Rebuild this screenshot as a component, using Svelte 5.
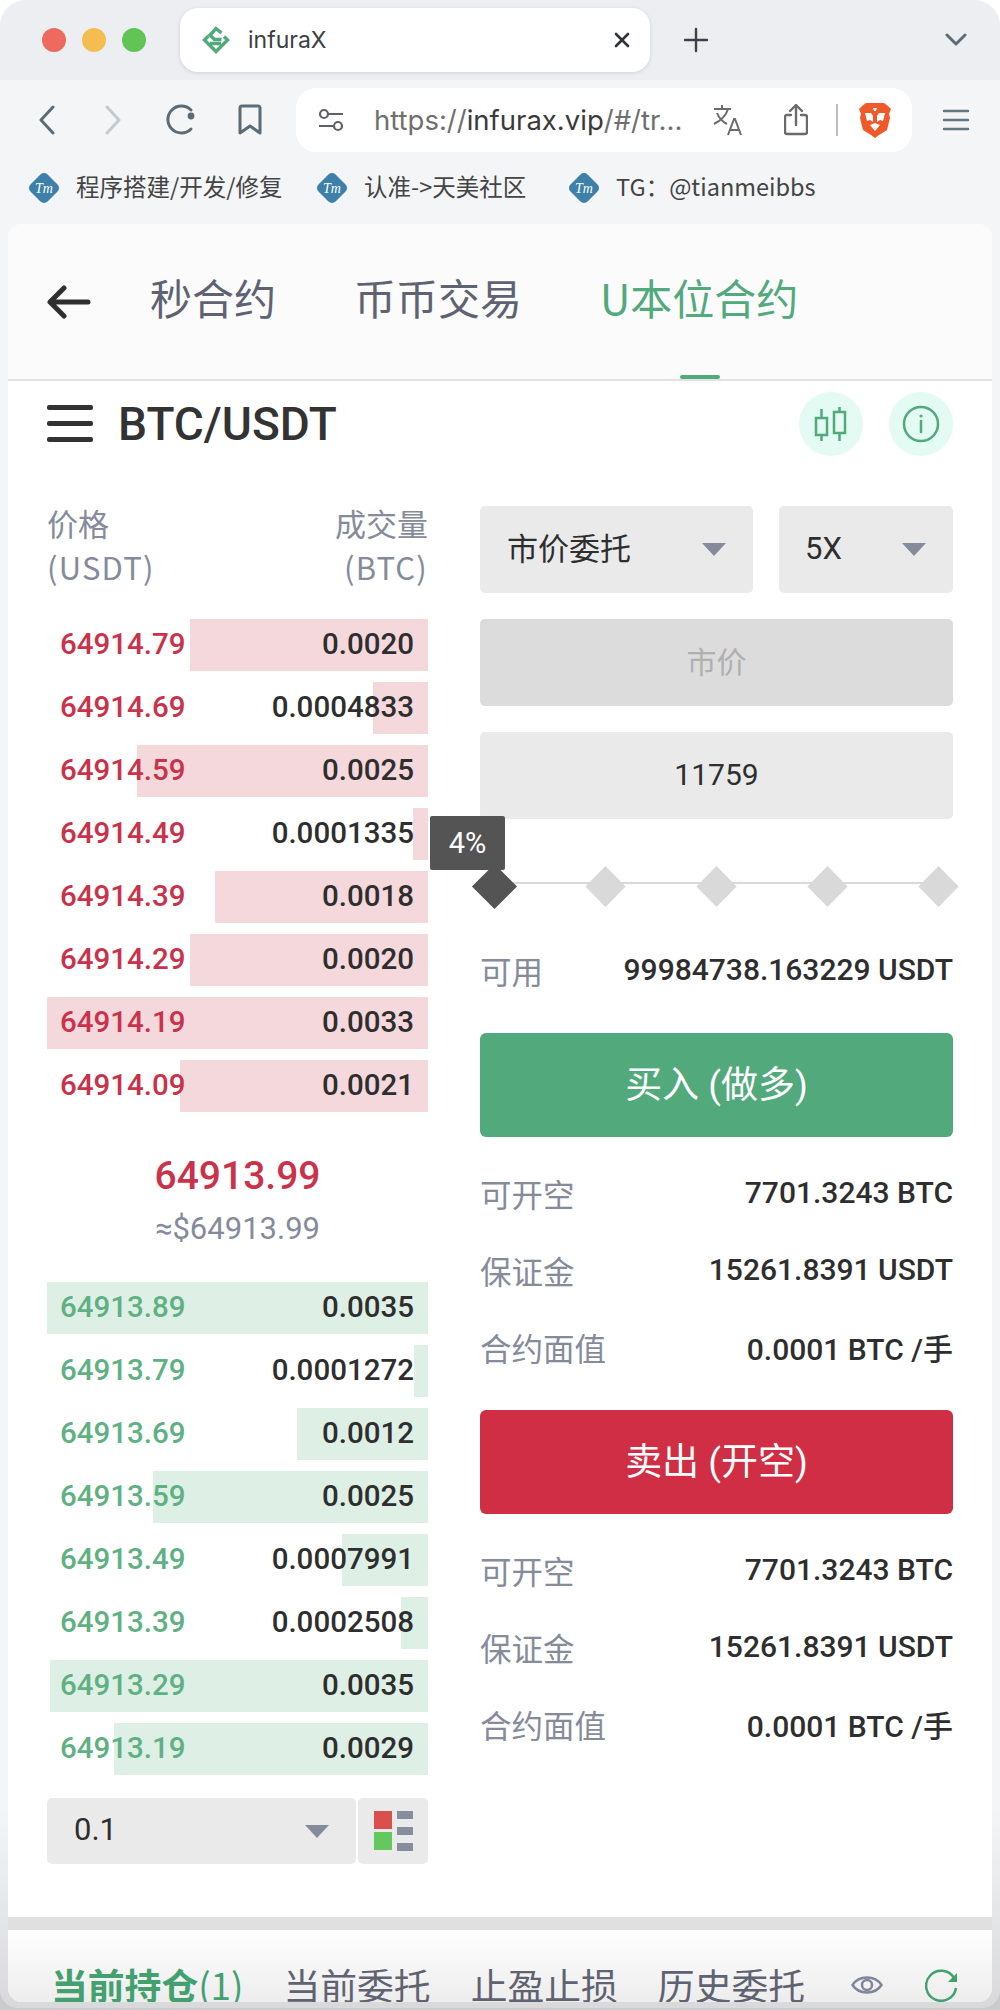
<script>
    const asks = [
        { price: "64914.79", size: "0.0020", left: 143 },
        { price: "64914.69", size: "0.0004833", left: 326 },
        { price: "64914.59", size: "0.0025", left: 90 },
        { price: "64914.49", size: "0.0001335", left: 366 },
        { price: "64914.39", size: "0.0018", left: 168 },
        { price: "64914.29", size: "0.0020", left: 143 },
        { price: "64914.19", size: "0.0033", left: 0 },
        { price: "64914.09", size: "0.0021", left: 133 },
    ];
    const bids = [
        { price: "64913.89", size: "0.0035", left: 0 },
        { price: "64913.79", size: "0.0001272", left: 367 },
        { price: "64913.69", size: "0.0012", left: 250 },
        { price: "64913.59", size: "0.0025", left: 106 },
        { price: "64913.49", size: "0.0007991", left: 295 },
        { price: "64913.39", size: "0.0002508", left: 354 },
        { price: "64913.29", size: "0.0035", left: 3 },
        { price: "64913.19", size: "0.0029", left: 67 },
    ];
    const shortInfo = [
        { label: "可开空", value: "7701.3243 BTC" },
        { label: "保证金", value: "15261.8391 USDT" },
        { label: "合约面值", value: "0.0001 BTC /手" },
    ];
    const bookmarks = ["程序搭建/开发/修复", "认准->天美社区", "TG：@tianmeibbs"];
</script>

<div class="screen">
<div class="window">
    <div class="tabstrip">
        <div class="lights">
            <i class="red"></i><i class="yellow"></i><i class="green"></i>
        </div>
        <div class="tab">
            <svg width="28" height="28" viewBox="0 0 28 28" fill="none" stroke="#52a97b" stroke-width="3.400">
                <path d="M19.500 7L14 2.500 8 9l4.500 4.500h7" />
                <path d="M6.500 10L2.500 14 14 25.500 25.500 14l-3.500-3.500" />
                <path d="M8 17.500h11" />
            </svg>
            <span>infuraX</span>
            <svg class="close" width="16" height="16" viewBox="0 0 16 16" stroke="#2f3338" stroke-width="2.600" stroke-linecap="round"><path d="M2 2l12 12M14 2L2 14" /></svg>
        </div>
        <svg class="plus" width="26" height="26" viewBox="0 0 26 26" stroke="#3d4248" stroke-width="2.400" stroke-linecap="round"><path d="M13 2v22M2 13h22" /></svg>
        <svg class="chev" width="22" height="14" viewBox="0 0 22 14" fill="none" stroke="#5c6b76" stroke-width="3" stroke-linecap="round" stroke-linejoin="round"><path d="M2 2l9 9 9-9" /></svg>
    </div>

    <div class="toolbar">
        <div class="nav">
            <svg width="18" height="30" viewBox="0 0 18 30" fill="none" stroke="#5c6b76" stroke-width="3" stroke-linecap="round" stroke-linejoin="round"><path d="M15 2L3 15l12 13" /></svg>
            <svg width="18" height="30" viewBox="0 0 18 30" fill="none" stroke="#c3c9cd" stroke-width="3" stroke-linecap="round" stroke-linejoin="round"><path d="M3 2l12 13L3 28" /></svg>
            <svg width="32" height="32" viewBox="0 0 32 32" fill="none" stroke="#5c6b76" stroke-width="3" stroke-linecap="round"><path d="M26 6A13.500 13.500 0 1 0 26 25" /><circle cx="26" cy="12" r="3.400" fill="#5c6b76" stroke="none" /></svg>
            <svg width="24" height="32" viewBox="0 0 24 32" fill="none" stroke="#5c6b76" stroke-width="3" stroke-linejoin="round"><path d="M2 4q0-2 2-2h16q2 0 2 2v25l-10-7-10 7z" /></svg>
        </div>
        <div class="urlbar">
            <svg class="sliders" width="26" height="24" viewBox="0 0 26 24" fill="none" stroke="#5f6265" stroke-width="2.200"><circle cx="6" cy="6" r="4" /><path d="M10 6h15M1 18h15" /><circle cx="20" cy="18" r="4" /></svg>
            <span class="url"><span class="faded">https://</span>infurax.vip<span class="faded">/#/tr...</span></span>
            <svg class="translate" width="32" height="32" viewBox="0 0 32 32" fill="none" stroke="#6b6b6b" stroke-width="2"><path d="M1 5h17M9 1v4M15 5C13 12 7 17 1 20M4 9c2 5 6 9 10 11M15 31l6-16h1l6 16M17 26h9" /></svg>
            <svg class="share" width="24" height="32" viewBox="0 0 24 32" fill="none" stroke="#6b6b6b" stroke-width="2.400" stroke-linejoin="round" stroke-linecap="round"><path d="M7 11H3q-2 0-2 2v15q0 2 2 2h18q2 0 2-2V13q0-2-2-2h-4M12 21V2M6 7l6-6 6 6" /></svg>
            <i class="sep"></i>
            <svg class="brave" width="32" height="36" viewBox="0 0 32 36">
                <path d="M7 1h18l4 3 3 3-2 5 1 4-3 12-8 5-4 3-4-3-8-5L1 16l1-4-2-5 3-3z" fill="#f0592a" />
                <path d="M6 11h6l2 3v6l-3-2-3 1zM26 11h-6l-2 3v6l3-2 3 1zM14 6h4l-1 3h-2z" fill="#fff" />
                <path d="M11 23l5-2 5 2-5 6z" fill="#fff" />
            </svg>
        </div>
        <svg class="burger" width="28" height="22" viewBox="0 0 28 22" stroke="#667680" stroke-width="2.400" stroke-linecap="round"><path d="M2 2h24M2 11h24M2 20h24" /></svg>
    </div>

    <div class="bookmarks">
        {#each bookmarks as mark}
            <div class="mark">
                <svg width="30" height="30" viewBox="0 0 30 30">
                    <path d="M15 5l10 10-10 10L5 15z" fill="#3d80a9" stroke="#3d80a9" stroke-width="10" stroke-linejoin="round" />
                    <text x="15" y="20" text-anchor="middle" class="tm">Tm</text>
                </svg>
                <span class="mark-text">{mark}</span>
            </div>
        {/each}
    </div>

    <div class="card">
        <header class="top">
            <svg width="44" height="34" viewBox="0 0 44 34" fill="none" stroke="#2f2f2f" stroke-width="5" stroke-linecap="round" stroke-linejoin="round"><path d="M41 17H4M17 3L3 17l14 14" /></svg>
            <span class="toptab one">秒合约</span>
            <span class="toptab two">币币交易</span>
            <span class="toptab active">U本位合约</span>
        </header>

        <div class="pair">
            <div class="burger-dark"><i></i><i></i><i></i></div>
            <span class="pair-name">BTC/USDT</span>
            <div class="pair-icons">
                <span class="round">
                    <svg width="34" height="36" viewBox="0 0 34 36" fill="none" stroke="#52a97b" stroke-width="2.500"><rect x="2" y="12" width="11" height="17" /><rect x="20" y="6" width="11" height="21" /><path d="M7.500 3v9M7.500 29v6M25.500 1v5M25.500 27v8" /></svg>
                </span>
                <span class="round">
                    <svg width="38" height="38" viewBox="0 0 38 38" fill="none" stroke="#52a97b" stroke-width="2.500"><circle cx="19" cy="19" r="17" /><path d="M19 16v11" stroke-linecap="round" /><circle cx="19" cy="11" r="1.600" fill="#52a97b" stroke="none" /></svg>
                </span>
            </div>
        </div>

        <div class="trade">
            <div class="book">
                <div class="book-head">
                    <span>价格<br /><span class="unit">(USDT)</span></span>
                    <span class="right">成交量<br /><span class="unit">(BTC)</span></span>
                </div>
                <div class="rows">
                    {#each asks as row}
                        <div class="row">
                            <i class="depth ask" style="left: {row.left}px"></i>
                            <span class="price ask-text">{row.price}</span>
                            <span class="size">{row.size}</span>
                        </div>
                    {/each}
                </div>
                <div class="mid">
                    <div class="mid-price">64913.99</div>
                    <div class="mid-usd">≈$64913.99</div>
                </div>
                <div class="rows">
                    {#each bids as row}
                        <div class="row">
                            <i class="depth bid" style="left: {row.left}px"></i>
                            <span class="price bid-text">{row.price}</span>
                            <span class="size">{row.size}</span>
                        </div>
                    {/each}
                </div>
                <div class="book-foot">
                    <div class="select step"><span class="num">0.1</span><i class="caret"></i></div>
                    <div class="layout-btn">
                        <div class="blocks"><i class="r"></i><i class="g"></i></div>
                        <div class="dots"><i></i><i></i><i></i></div>
                    </div>
                </div>
            </div>

            <div class="form">
                <div class="selects">
                    <div class="select kind"><span>市价委托</span><i class="caret"></i></div>
                    <div class="select lever"><span class="num">5X</span><i class="caret"></i></div>
                </div>
                <div class="field disabled"><span>市价</span></div>
                <div class="field"><span class="num">11759</span></div>

                <div class="slider">
                    <i class="track"></i>
                    <i class="node on"></i><i class="node"></i><i class="node"></i><i class="node"></i><i class="node"></i>
                    <span class="tip">4%</span>
                </div>

                <div class="info"><span>可用</span><b>99984738.163229 USDT</b></div>

                <div class="action buy"><span>买入 (做多)</span></div>
                <div class="infos">
                    {#each shortInfo as item}
                        <div class="info"><span>{item.label}</span><b>{item.value}</b></div>
                    {/each}
                </div>
                <div class="action sell"><span>卖出 (开空)</span></div>
                <div class="infos">
                    {#each shortInfo as item}
                        <div class="info"><span>{item.label}</span><b>{item.value}</b></div>
                    {/each}
                </div>
            </div>
        </div>

        <div class="band"></div>

        <div class="orders">
            <span class="order active">当前持仓<span class="count">(1)</span></span>
            <span class="order">当前委托</span>
            <span class="order">止盈止损</span>
            <span class="order">历史委托</span>
            <svg class="eye" width="32" height="22" viewBox="0 0 32 22" fill="none" stroke="#80869a" stroke-width="2.500"><path d="M1.500 11C8 1 24 1 30.500 11 24 21 8 21 1.500 11z" /><circle cx="16" cy="11" r="5" /></svg>
            <svg class="reload" width="34" height="34" viewBox="0 0 34 34" fill="none" stroke="#43a06f" stroke-width="2.500"><path d="M29 10A15 15 0 1 0 31 20" /><path d="M32 5v9h-9z" fill="#43a06f" stroke="none" /></svg>
        </div>
    </div>
</div>
</div>

<style>
    :global(body) {
        margin: 0;
    }
    .screen {
        width: 1000px;
        height: 2010px;
        background: linear-gradient(#fff 50%, #cbcbcd 50%);
    }
    .window {
        width: 1000px;
        height: 2008px;
        overflow: hidden;
        background: linear-gradient(#f3f5f7 90%, #d9d9db);
        border-radius: 26px 26px 18px 18px;
        font-family: "Noto Sans CJK SC", "Noto Sans", sans-serif;
    }
    i {
        display: block;
    }

    .tabstrip {
        height: 80px;
        box-sizing: border-box;
        background: #eceef2;
        display: flex;
        align-items: center;
        padding-left: 42px;
    }
    .lights {
        display: flex;
        gap: 16px;
        width: 138px;
    }
    .lights i {
        width: 24px;
        height: 24px;
        border-radius: 50%;
    }
    .red {
        background: #ee6a5f;
    }
    .yellow {
        background: #f5bd4f;
    }
    .green {
        background: #61c454;
    }
    .tab {
        width: 470px;
        height: 64px;
        box-sizing: border-box;
        background: #fff;
        border-radius: 18px;
        box-shadow: 0 1px 4px rgba(0, 0, 0, 0.12);
        display: flex;
        align-items: center;
        padding: 0 20px 0 22px;
        font-family: "Inter", sans-serif;
        font-size: 23px;
        color: #3c4043;
    }
    .tab span {
        margin-left: 18px;
    }
    .close {
        margin-left: auto;
    }
    .plus {
        margin-left: 33px;
    }
    .chev {
        margin-left: auto;
        margin-right: 33px;
    }

    .toolbar {
        height: 80px;
        display: flex;
        align-items: center;
        padding-left: 14px;
    }
    .nav {
        width: 282px;
        display: grid;
        grid-template-columns: 66px 66px 70px 68px;
        justify-items: center;
        align-items: center;
    }
    .urlbar {
        width: 616px;
        height: 64px;
        background: #fff;
        border-radius: 20px;
        display: flex;
        align-items: center;
        padding-left: 22px;
        box-sizing: border-box;
    }
    .url {
        width: 310px;
        margin-left: 30px;
        font-family: "Inter", sans-serif;
        font-size: 27.500px;
        color: #3a3a3a;
        white-space: nowrap;
    }
    .faded {
        color: #6f6f6f;
    }
    .translate {
        margin-left: 29px;
    }
    .share {
        margin-left: 39px;
    }
    .sep {
        width: 2px;
        height: 32px;
        background: #bdbdbd;
        margin-left: 28px;
    }
    .brave {
        margin-left: 21px;
    }
    .burger {
        margin-left: 30px;
    }

    .bookmarks {
        height: 64px;
        box-sizing: border-box;
        padding: 0 0 8px 29px;
        display: flex;
        align-items: center;
        font-size: 23.500px;
        color: #444;
    }
    .mark {
        display: flex;
        align-items: center;
        gap: 17px;
    }
    .mark:nth-child(1) {
        width: 288px;
    }
    .mark:nth-child(2) {
        width: 252px;
    }
    .mark-text {
        padding-bottom: 4px;
    }
    .tm {
        fill: #fff;
        font: italic 14px "Liberation Serif", serif;
    }

    .card {
        margin: 0 8px;
        height: 1778px;
        background: #fff;
        border-radius: 14px;
        overflow: hidden;
        position: relative;
    }
    .top {
        height: 157px;
        box-sizing: border-box;
        background: #fbfbfc;
        border-bottom: 2px solid #e2e2e2;
        display: flex;
        align-items: center;
        padding-left: 39px;
        font-size: 42px;
        color: #5f6270;
        position: relative;
    }
    .toptab {
        padding-bottom: 10px;
    }
    .toptab.one {
        margin-left: 59px;
    }
    .toptab.two {
        margin-left: 78px;
    }
    .toptab.active {
        margin-left: 78px;
        color: #52a97b;
    }
    .toptab.active::after {
        content: "";
        position: absolute;
        left: 672px;
        bottom: 0;
        width: 40px;
        height: 4px;
        border-radius: 2px;
        background: #52a97b;
    }

    .pair {
        height: 125px;
        box-sizing: border-box;
        display: flex;
        align-items: flex-start;
        padding: 11px 0 0 39px;
    }
    .burger-dark {
        width: 46px;
        margin-top: 13px;
        display: flex;
        flex-direction: column;
        gap: 11px;
    }
    .burger-dark i {
        height: 5px;
        border-radius: 2px;
        background: #333;
    }
    .pair-name {
        margin-left: 25px;
        font: 500 46px/64px "Roboto", sans-serif;
        color: #333;
    }
    .pair-icons {
        margin-left: auto;
        margin-right: 39px;
        display: flex;
        gap: 26px;
    }
    .round {
        width: 64px;
        height: 64px;
        border-radius: 50%;
        background: #e3fbf2;
        display: flex;
        align-items: center;
        justify-content: center;
    }

    .trade {
        display: flex;
        padding: 0 39px;
        gap: 52px;
        align-items: flex-start;
    }
    .book {
        width: 381px;
        flex-shrink: 0;
    }
    .book-head {
        display: flex;
        justify-content: space-between;
        font-size: 31px;
        line-height: 44px;
        color: #858b9b;
        height: 118px;
        margin-top: -5px;
    }
    .book-head .right {
        text-align: right;
    }
    .unit {
        letter-spacing: 1.200px;
    }
    .rows {
        display: flex;
        flex-direction: column;
        gap: 11px;
    }
    .row {
        height: 52px;
        position: relative;
        display: flex;
        align-items: center;
        justify-content: space-between;
        padding: 0 14px 2px 13px;
        box-sizing: border-box;
        font-family: "Roboto", sans-serif;
        font-weight: 500;
        font-size: 29.500px;
    }
    .depth {
        position: absolute;
        top: 0;
        bottom: 0;
        right: 0;
    }
    .depth.ask {
        background: #f5d8dc;
    }
    .depth.bid {
        background: #deefe6;
    }
    .price,
    .size {
        position: relative;
    }
    .ask-text {
        color: #c9324a;
    }
    .bid-text {
        color: #5fb183;
    }
    .size {
        color: #2e2e2e;
    }
    .mid {
        height: 170px;
        box-sizing: border-box;
        padding-top: 36px;
        text-align: center;
        font-family: "Roboto", sans-serif;
    }
    .mid-price {
        font-size: 39px;
        font-weight: 500;
        line-height: 56px;
        color: #c9324a;
    }
    .mid-usd {
        font-size: 31px;
        line-height: 50px;
        color: #858b9b;
    }
    .book-foot {
        display: flex;
        gap: 2px;
        margin-top: 23px;
    }

    .select {
        height: 87px;
        background: #eaeaea;
        border-radius: 5px;
        display: flex;
        align-items: center;
        padding: 0 27px;
        box-sizing: border-box;
        font-size: 31px;
        color: #2e2e2e;
        font-family: "Roboto", "Noto Sans CJK SC", sans-serif;
    }
    .select span,
    .field span,
    .action span {
        padding-bottom: 6px;
    }
    .select .num,
    .field .num {
        padding-bottom: 3px;
    }
    .caret {
        margin-left: auto;
        width: 0;
        height: 0;
        border-left: 12px solid transparent;
        border-right: 12px solid transparent;
        border-top: 13px solid #858b9b;
    }
    .select.step {
        flex: 1;
        height: 66px;
    }
    .layout-btn {
        width: 70px;
        height: 66px;
        background: #eaeaea;
        border-radius: 5px;
        display: flex;
        gap: 5px;
        padding: 13px 16px;
        box-sizing: border-box;
    }
    .blocks {
        display: flex;
        flex-direction: column;
        gap: 3px;
    }
    .blocks i {
        width: 18px;
        height: 18px;
    }
    .blocks .r {
        background: #d9504d;
    }
    .blocks .g {
        background: #63c95c;
    }
    .dots {
        display: flex;
        flex-direction: column;
        justify-content: space-between;
    }
    .dots i {
        width: 16px;
        height: 8px;
        background: #878d9c;
    }

    .form {
        flex: 1;
    }
    .selects {
        display: flex;
        gap: 26px;
    }
    .kind {
        flex: 1;
    }
    .lever {
        width: 174px;
        padding-left: 26px;
    }
    .field {
        height: 87px;
        margin-top: 26px;
        background: #eaeaea;
        border-radius: 5px;
        display: flex;
        align-items: center;
        justify-content: center;
        font: 30px "Roboto", "Noto Sans CJK SC", sans-serif;
        color: #2e2e2e;
    }
    .field.disabled {
        background: #dcdcdc;
        color: #b0b0b0;
    }

    .slider {
        height: 90px;
        margin-top: 22px;
        position: relative;
        display: flex;
        justify-content: space-between;
        align-items: center;
    }
    .track {
        position: absolute;
        left: 10px;
        right: 10px;
        top: 41px;
        height: 2px;
        background: #d9d9d9;
    }
    .node {
        width: 29px;
        height: 29px;
        background: #d9d9d9;
        transform: scale(0.98, 1) rotate(45deg);
        position: relative;
    }
    .node.on {
        background: #545454;
        transform: scale(1.1) rotate(45deg);
    }
    .tip {
        position: absolute;
        left: -50px;
        top: -25px;
        width: 75px;
        height: 54px;
        background: #545454;
        border-radius: 2px;
        color: #fff;
        display: flex;
        align-items: center;
        justify-content: center;
        font: 29px "Roboto", sans-serif;
    }

    .info {
        height: 77px;
        display: flex;
        justify-content: space-between;
        align-items: center;
        font-size: 31.500px;
        color: #858b9b;
    }
    .info b {
        font-family: "Roboto", "Noto Sans CJK SC", sans-serif;
        font-weight: 500;
        font-size: 30px;
        color: #2e2e2e;
    }
    .action {
        height: 104px;
        margin-top: 25px;
        border-radius: 6px;
        color: #fff;
        font: 37px "Roboto", "Noto Sans CJK SC", sans-serif;
        display: flex;
        align-items: center;
        justify-content: center;
    }
    .buy {
        background: #52a97b;
    }
    .sell {
        background: #cf2e44;
    }
    .infos {
        margin: 17px 0 4px;
    }

    .band {
        height: 13px;
        background: #e0e0e0;
        position: absolute;
        left: 0;
        right: 0;
        top: 1693px;
    }
    .orders {
        position: absolute;
        left: 0;
        right: 0;
        top: 1706px;
        height: 72px;
        background: linear-gradient(#fff, #ededed);
        box-sizing: border-box;
        display: flex;
        align-items: flex-end;
        padding: 0 33px 0 43px;
        font-size: 36.800px;
        color: #5f6270;
        line-height: 36px;
    }
    .order {
        margin-right: 40px;
        white-space: nowrap;
    }
    .order.active {
        color: #43a06f;
        font-weight: 700;
    }
    .count {
        font-weight: 400;
    }
    .eye {
        margin-left: auto;
        margin-right: 42px;
        margin-bottom: 6px;
        flex-shrink: 0;
    }
    .reload {
        flex-shrink: 0;
    }
</style>
